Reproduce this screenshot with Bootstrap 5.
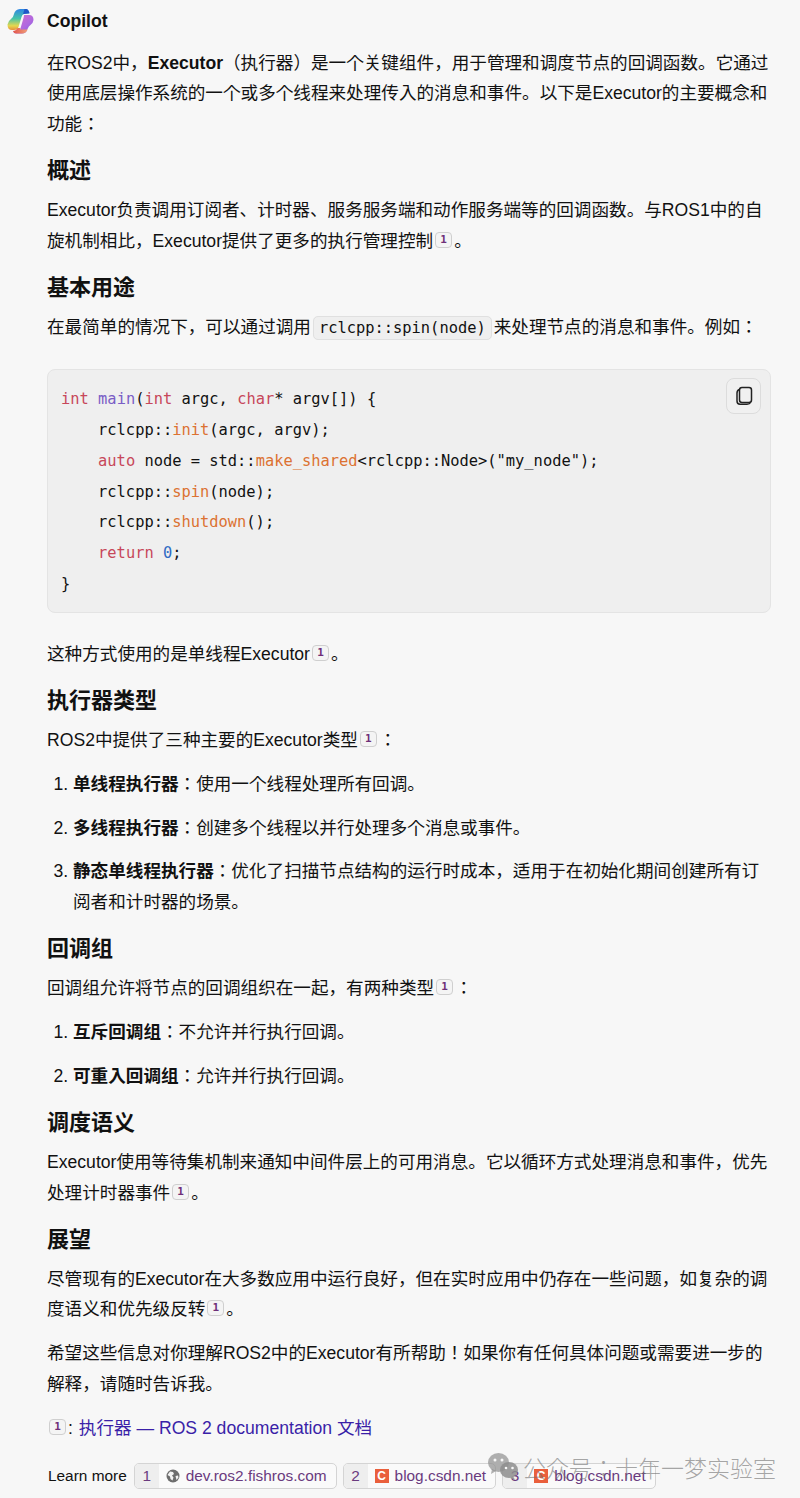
<!DOCTYPE html>
<html>
<head>
  <meta charset="UTF-8" />
  <meta name="viewport" content="width=device-width, initial-scale=1.0"/>
  <title>Copilot</title>
  <link href="https://cdn.jsdelivr.net/npm/bootstrap@5.3.3/dist/css/bootstrap.min.css" rel="stylesheet" />
  <style>
    body {
      background: #f7f7f7;
      color: #111;
      font-family: "Liberation Sans", "Noto Sans CJK JP", sans-serif;
      font-size: 17.6px;
      line-height: 30.8px;
      height: 1498px;
      overflow: hidden;
      position: relative;
    }
    .chat-head { height: 42px; padding-left: 7px; gap: 13px; }
    .chat-name { font-weight: 700; font-size: 17.6px; }
    .chat-body { padding: 5.5px 29px 0 47px; }
    .chat-body p { margin: 0 0 13px; }
    .chat-body h3 {
      font-size: 22px;
      font-weight: 700;
      line-height: 30.8px;
      margin: 16.4px 0 8px;
    }
    .chat-body ol { margin: 0 0 13px; padding-left: 26px; }
    .chat-body li { margin-bottom: 13px; }
    .chat-body li:last-child { margin-bottom: 0; }
    .cite {
      display: inline-block;
      width: 17px;
      height: 16px;
      margin: 0 2px;
      border: 1px solid #cfcfcf;
      border-radius: 4px;
      background: #f4f4f4;
      color: #6e2f78;
      font: 700 11px/14px "DejaVu Sans Mono", monospace;
      text-align: center;
      vertical-align: 4px;
    }
    .code-inline {
      font: 15.4px/20px "DejaVu Sans Mono", monospace;
      color: #111;
      background: #efefef;
      border: 1px solid #e0e0e0;
      border-radius: 5px;
      padding: 2px 5px;
      margin: 0 2px;
    }
    .code-box {
      position: relative;
      background: #efefef;
      border: 1px solid #e4e4e4;
      border-radius: 8px;
      margin: 26.4px 0 26px;
      padding: 14px 13px 13px;
      height: 244px;
    }
    .code-box pre {
      margin: 0;
      font: 15.4px/30.85px "DejaVu Sans Mono", monospace;
      color: #111;
      overflow: hidden;
    }
    .k { color: #c7475a; }
    .f { color: #7a5ec6; }
    .m { color: #dc7232; }
    .n { color: #2f6bc4; }
    .copy-btn {
      position: absolute;
      top: 8px;
      right: 9px;
      width: 35px;
      height: 36px;
      border: 1px solid #dcdcdc;
      border-radius: 8px;
      background: #f0f0f0;
    }
    .ref-link { color: #3a1fa8; text-decoration: none; margin-left: 1px; }
    .learn-row { font-size: 15.4px; line-height: 24px; margin-top: 19px; gap: 6px; }
    .learn-label { font-size: 15.4px; margin: 0 1px; }
    .src-chip {
      height: 26px;
      border: 1px solid #d4d4d4;
      border-radius: 5px;
      background: #fafafa;
      color: #6a3a7e;
      overflow: hidden;
      white-space: nowrap;
    }
    .src-num { width: 24px; background: #eeeeee; text-align: center; }
    .src-icon { margin: 0 6px 0 7px; }
    .src-text { padding-right: 9px; }
    .csdn {
      width: 14px;
      height: 14px;
      background: #ea5f3c;
      color: #fff;
      font: 700 12px/14px "Liberation Sans", sans-serif;
      text-align: center;
    }
    .mark-wm {
      position: absolute;
      left: 488px;
      top: 1453px;
      gap: 4px;
      color: rgba(110,110,110,.6);
      font: 300 23px/28px "Noto Sans CJK JP", sans-serif;
      white-space: nowrap;
    }
  </style>
</head>
<body>

  <!-- header -->
  <div class="chat-head d-flex align-items-center">
    <svg width="27" height="27" viewBox="0 0 27 27">
      <defs>
        <linearGradient id="g1" x1="0" y1="0" x2="0" y2="1">
          <stop offset="0" stop-color="#2f86e4"/>
          <stop offset=".45" stop-color="#45c4a8"/>
          <stop offset=".8" stop-color="#e5d84e"/>
          <stop offset="1" stop-color="#e8903c"/>
        </linearGradient>
        <linearGradient id="g2" x1="0" y1="0" x2="1" y2="1">
          <stop offset="0" stop-color="#d870c8"/>
          <stop offset=".6" stop-color="#b068e0"/>
          <stop offset="1" stop-color="#7a5ce0"/>
        </linearGradient>
        <linearGradient id="g3" x1="0" y1="0" x2="1" y2="0">
          <stop offset="0" stop-color="#e2554a"/>
          <stop offset="1" stop-color="#f0a07c"/>
        </linearGradient>
      </defs>
      <path d="M9 2.500Q10.500 1 13 1H19Q21.500 1 22.500 5L17 6Q15 6.500 14.500 9L11.500 19Q10.500 22 7 22H5Q.5 22 .5 16.500Q1 13 4 11Q6.500 9 7 6Q7.500 3.500 9 2.500z" fill="url(#g1)"/>
      <path d="M17.500 1H19Q21.500 1 22.500 5.500L16 6Q17 3 17.500 1z" fill="#2058c8"/>
      <path d="M17 7H22Q26.500 7 26.500 12Q26 15 24 16.500Q21.500 18 20.500 21Q19 25.500 15 25.500H9Q7 25.500 6 23.500L13 22L16.500 10Q17 8 17 7z" fill="url(#g2)"/>
      <path d="M6 23Q9 23 10.500 20H13.500L13 21.500H20.700Q19 25.500 15 25.500H9Q7 25.500 6 23z" fill="url(#g3)"/>
    </svg>
    <span class="chat-name">Copilot</span>
  </div>

  <div class="chat-body">
    <p>在ROS2中，<strong>Executor</strong>（执行器）是一个关键组件，用于管理和调度节点的回调函数。它通过使用底层操作系统的一个或多个线程来处理传入的消息和事件。以下是Executor的主要概念和功能：</p>

    <h3>概述</h3>
    <p>Executor负责调用订阅者、计时器、服务服务端和动作服务端等的回调函数。与ROS1中的自旋机制相比，Executor提供了更多的执行管理控制<span class="cite">1</span>。</p>

    <h3>基本用途</h3>
    <p class="mb-0">在最简单的情况下，可以通过调用<code class="code-inline">rclcpp::spin(node)</code>来处理节点的消息和事件。例如：</p>

    <div class="code-box">
      <button type="button" class="copy-btn d-flex align-items-center justify-content-center p-0" aria-label="复制">
        <svg width="20" height="20" viewBox="0 0 20 20" fill="none" stroke="#222" stroke-width="1.500">
          <rect x="5.500" y="1.500" width="12" height="15" rx="2.500"/>
          <path d="M5.500 3.500C3.500 4 3 5.500 3 7v8c0 2 1 3.200 3 3.200h7c1.500 0 3-.6 3.500-1.700"/>
        </svg>
      </button>
<pre><span class="k">int</span> <span class="f">main</span>(<span class="k">int</span> argc, <span class="k">char</span>* argv[]) {
    rclcpp::<span class="m">init</span>(argc, argv);
    <span class="k">auto</span> node = std::<span class="m">make_shared</span>&lt;rclcpp::Node&gt;("my_node");
    rclcpp::<span class="m">spin</span>(node);
    rclcpp::<span class="m">shutdown</span>();
    <span class="k">return</span> <span class="n">0</span>;
}</pre>
    </div>

    <p>这种方式使用的是单线程Executor<span class="cite">1</span>。</p>

    <h3>执行器类型</h3>
    <p>ROS2中提供了三种主要的Executor类型<span class="cite">1</span>：</p>
    <ol>
      <li><strong>单线程执行器</strong>：使用一个线程处理所有回调。</li>
      <li><strong>多线程执行器</strong>：创建多个线程以并行处理多个消息或事件。</li>
      <li><strong>静态单线程执行器</strong>：优化了扫描节点结构的运行时成本，适用于在初始化期间创建所有订阅者和计时器的场景。</li>
    </ol>

    <h3>回调组</h3>
    <p>回调组允许将节点的回调组织在一起，有两种类型<span class="cite">1</span>：</p>
    <ol>
      <li><strong>互斥回调组</strong>：不允许并行执行回调。</li>
      <li><strong>可重入回调组</strong>：允许并行执行回调。</li>
    </ol>

    <h3>调度语义</h3>
    <p>Executor使用等待集机制来通知中间件层上的可用消息。它以循环方式处理消息和事件，优先处理计时器事件<span class="cite">1</span>。</p>

    <h3>展望</h3>
    <p>尽管现有的Executor在大多数应用中运行良好，但在实时应用中仍存在一些问题，如复杂的调度语义和优先级反转<span class="cite">1</span>。</p>

    <p>希望这些信息对你理解ROS2中的Executor有所帮助！如果你有任何具体问题或需要进一步的解释，请随时告诉我。</p>

    <div><span class="cite">1</span>: <a class="ref-link" href="#">执行器 — ROS 2 documentation 文档</a></div>

    <div class="learn-row d-flex align-items-center">
      <span class="learn-label">Learn more</span>
      <a class="src-chip d-flex text-decoration-none" href="#">
        <span class="src-num">1</span>
        <svg class="src-icon align-self-center" width="14" height="14" viewBox="0 0 14 14">
          <circle cx="7" cy="7" r="6.500" fill="#6d6d6d"/>
          <path d="M4 2.500l3 .5 1 2-2 1.500 1.500 2-1 3-2-1.500-.5-2.500-2.500-1.500z M9.500 7l2.500-.5.500 2-2 2.500z" fill="#f2f2f2"/>
        </svg>
        <span class="src-text">dev.ros2.fishros.com</span>
      </a>
      <a class="src-chip d-flex text-decoration-none" href="#">
        <span class="src-num">2</span>
        <span class="src-icon csdn align-self-center">C</span>
        <span class="src-text">blog.csdn.net</span>
      </a>
      <a class="src-chip d-flex text-decoration-none" href="#">
        <span class="src-num">3</span>
        <span class="src-icon csdn align-self-center">C</span>
        <span class="src-text">blog.csdn.net</span>
      </a>
    </div>
  </div>

  <!-- watermark -->
  <div class="mark-wm d-flex align-items-start">
    <svg width="31" height="28" viewBox="0 0 31 28">
      <ellipse cx="10.500" cy="9.500" rx="10.500" ry="9.500" fill="#8e8e8e" fill-opacity=".7"/>
      <path d="M4 16l-1 5 5-3z" fill="#8e8e8e" fill-opacity=".7"/>
      <ellipse cx="21" cy="17" rx="9" ry="8" fill="#8e8e8e" fill-opacity=".85"/>
      <path d="M25 23l2 4-5-2z" fill="#8e8e8e" fill-opacity=".85"/>
      <circle cx="7" cy="7" r="1.500" fill="#f7f7f7"/>
      <circle cx="14" cy="7" r="1.500" fill="#f7f7f7"/>
      <circle cx="18" cy="15" r="1.300" fill="#f7f7f7"/>
      <circle cx="24.500" cy="15" r="1.300" fill="#f7f7f7"/>
    </svg>
    <span>公众号：十年一梦实验室</span>
  </div>

  <script src="https://cdn.jsdelivr.net/npm/bootstrap@5.3.3/dist/js/bootstrap.bundle.min.js"></script>
</body>
</html>
